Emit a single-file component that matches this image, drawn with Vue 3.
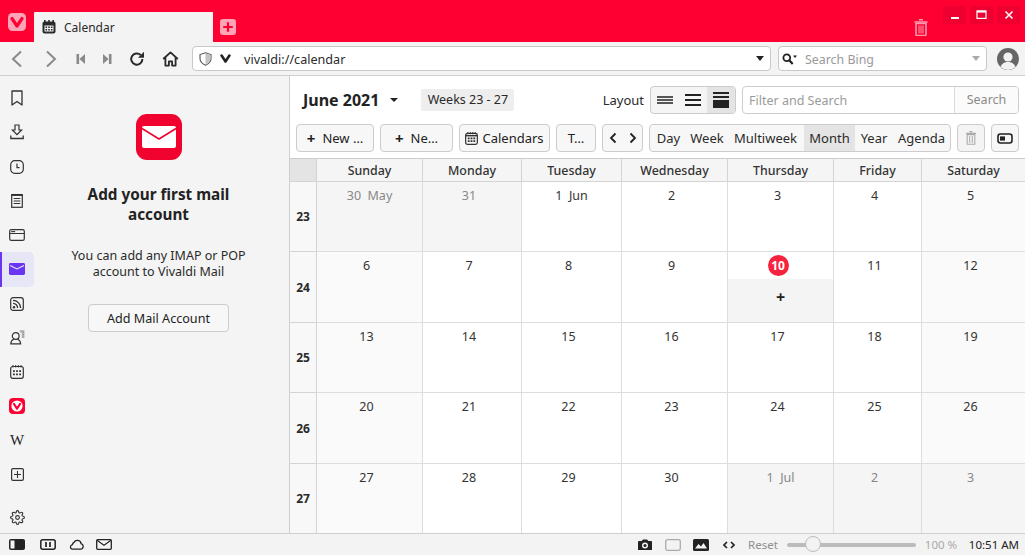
<script setup>
const days = ['Sunday','Monday','Tuesday','Wednesday','Thursday','Friday','Saturday']
const weeks = [
  { n: 23, cells: [['30  May','out m'],['31','out'],['1  Jun','m'],['2',''],['3',''],['4',''],['5','we']] },
  { n: 24, cells: [['6','we'],['7',''],['8',''],['9',''],['10','today'],['11',''],['12','we']] },
  { n: 25, cells: [['13','we'],['14',''],['15',''],['16',''],['17',''],['18',''],['19','we']] },
  { n: 26, cells: [['20','we'],['21',''],['22',''],['23',''],['24',''],['25',''],['26','we']] },
  { n: 27, cells: [['27','we'],['28',''],['29',''],['30',''],['1  Jul','out m'],['2','out'],['3','out']] }
]
</script>

<template>
  <div class="app">
    <header class="titlebar">
      <div class="logo-wrap">
        <svg width="18" height="18" viewBox="0 0 18 18"><rect width="18" height="18" rx="4.5" fill="#ffa3b6"/><path d="M4 5.5 L9 13 L14 5.5" fill="none" stroke="#ff0033" stroke-width="3.2" stroke-linecap="round" stroke-linejoin="round"/></svg>
      </div>
      <div class="tab">
        <svg width="14" height="14" viewBox="0 0 14 14"><rect x="0.5" y="1.5" width="13" height="12" rx="2" fill="#2a2a2a"/><rect x="2" y="0" width="1.6" height="3" fill="#2a2a2a"/><rect x="6.2" y="0" width="1.6" height="3" fill="#2a2a2a"/><rect x="10.4" y="0" width="1.6" height="3" fill="#2a2a2a"/><path d="M2.5 5.5h9v6h-9z" fill="#f3f3f3"/><path d="M3.5 6.5h1.6v1.6H3.5zM6.2 6.5h1.6v1.6H6.2zM8.9 6.5h1.6v1.6H8.9zM3.5 9h1.6v1.6H3.5zM6.2 9h1.6v1.6H6.2zM8.9 9h1.6v1.6H8.9z" fill="#2a2a2a"/></svg>
        <span>Calendar</span>
      </div>
      <div class="newtab">
        <svg width="16" height="16" viewBox="0 0 16 16"><rect width="16" height="16" rx="3" fill="#ffa3b6"/><path d="M8 3.2v9.6M3.2 8h9.6" stroke="#ff0033" stroke-width="2.2"/></svg>
      </div>
      <div class="spacer"></div>
      <svg class="ttrash" width="14" height="17" viewBox="0 0 14 17"><path d="M5 0.8h4M0.5 3h13" stroke="#ff9aae" stroke-width="1.6"/><path d="M2 4.5h10v11a1 1 0 0 1-1 1H3a1 1 0 0 1-1-1z" fill="none" stroke="#ff9aae" stroke-width="1.6"/><path d="M5 6.5v8M7 6.5v8M9 6.5v8" stroke="#ff9aae" stroke-width="1"/></svg>
      <div class="winctl">
        <div class="wbtn"><svg width="10" height="10" viewBox="0 0 10 10"><rect x="1" y="7" width="8" height="2" fill="#fff"/></svg></div>
        <div class="wbtn"><svg width="12" height="10" viewBox="0 0 12 10"><rect x="1" y="1" width="9" height="7.4" fill="none" stroke="#fff" stroke-width="1.2"/><rect x="1" y="0.6" width="9" height="2" fill="#fff"/></svg></div>
        <div class="wbtn"><svg width="10" height="10" viewBox="0 0 10 10"><path d="M1.5 1.5l7 7M8.5 1.5l-7 7" stroke="#fff" stroke-width="1.6"/></svg></div>
      </div>
    </header>

    <nav class="toolbar">
      <svg class="nb first" width="14" height="18" viewBox="0 0 14 18"><path d="M11 1.5L3 9l8 7.5" fill="none" stroke="#8a8a8a" stroke-width="2"/></svg>
      <svg class="nb next" width="14" height="18" viewBox="0 0 14 18"><path d="M3 1.5L11 9l-8 7.5" fill="none" stroke="#8a8a8a" stroke-width="2"/></svg>
      <svg class="nb rw" width="10" height="12" viewBox="0 0 10 12"><path d="M0.5 1h2.6v10H0.5zM9 1v10L3.4 6z" fill="#8a8a8a"/></svg>
      <svg class="nb ff" width="10" height="12" viewBox="0 0 10 12"><path d="M9.5 1H6.9v10h2.6zM1 1v10L6.6 6z" fill="#8a8a8a"/></svg>
      <svg class="nb reload" width="16" height="16" viewBox="0 0 16 16"><path d="M13.4 8a5.6 5.6 0 1 1-1.7-4" fill="none" stroke="#2a2a2a" stroke-width="2"/><path d="M15 0.8v6h-6z" fill="#2a2a2a"/></svg>
      <svg class="nb home" width="17" height="16" viewBox="0 0 17 16"><path d="M1.2 8L8.5 1.4 15.8 8M3.4 6.5V14.6h3.5v-4.2h3.2v4.2h3.5V6.5" fill="none" stroke="#2a2a2a" stroke-width="1.8" stroke-linejoin="round"/></svg>
      <div class="addr">
        <svg width="13" height="14" viewBox="0 0 13 14"><path d="M6.5 0.8L12 2.6v4c0 3.2-2.4 5.3-5.5 6.6C3.4 11.9 1 9.8 1 6.6v-4z" fill="#fff" stroke="#555" stroke-width="1.1"/><path d="M6.5 1.2L11.6 2.9v3.7c0 3-2.2 5-5.1 6.2z" fill="#c4c4c4"/></svg>
        <svg class="v" width="11" height="9" viewBox="0 0 11 9"><path d="M1.6 1.6L5.5 7.4l3.9-5.8" fill="none" stroke="#222" stroke-width="2.6" stroke-linecap="round" stroke-linejoin="round"/></svg>
        <span class="url">vivaldi://calendar</span>
        <span class="spacer"></span>
        <span class="caret"></span>
      </div>
      <div class="search">
        <svg width="16" height="12" viewBox="0 0 16 12"><circle cx="4.8" cy="4.8" r="3.4" fill="none" stroke="#222" stroke-width="1.8"/><path d="M7.3 7.3l3.4 3.6" stroke="#222" stroke-width="2.2"/><path d="M11 2.5h4l-2 2.4z" fill="#222"/></svg>
        <span class="sph">Search Bing</span>
        <span class="spacer"></span>
        <span class="caret grey"></span>
      </div>
      <svg class="avatar" width="22" height="22" viewBox="0 0 22 22"><circle cx="11" cy="11" r="11" fill="#666"/><circle cx="11" cy="9" r="4.6" fill="#f3f3f3"/><path d="M3.5 19c1.5-4 4.5-5 7.5-5s6 1 7.5 5a11 11 0 0 1-15 0z" fill="#f3f3f3"/></svg>
    </nav>

    <div class="main">
      <aside class="iconbar">
        <div class="ib"><svg width="14" height="16" viewBox="0 0 14 16"><path d="M2 1h10v14L7 11.5 2 15z" fill="none" stroke="#333" stroke-width="1.3" stroke-linejoin="round"/></svg></div>
        <div class="ib"><svg width="14" height="16" viewBox="0 0 14 16"><path d="M5 1h4v5h2.6L7 10.6 2.4 6H5z" fill="none" stroke="#333" stroke-width="1.2"/><path d="M0.8 11.5v3h12.4v-3" fill="none" stroke="#333" stroke-width="1.3"/></svg></div>
        <div class="ib"><svg width="14" height="14" viewBox="0 0 14 14"><rect x="0.7" y="0.7" width="12.6" height="12.6" rx="4" fill="none" stroke="#333" stroke-width="1.2"/><path d="M7 3.5V7.6h2.6" fill="none" stroke="#333" stroke-width="1.2"/></svg></div>
        <div class="ib"><svg width="12" height="14" viewBox="0 0 12 14"><rect x="0.7" y="0.7" width="10.6" height="12.6" fill="none" stroke="#333" stroke-width="1.2"/><path d="M0.7 1h10.6" stroke="#222" stroke-width="1.6"/><path d="M2.7 4.5h6.6M2.7 7h6.6M2.7 9.5h6.6" stroke="#333"/></svg></div>
        <div class="ib"><svg width="16" height="12" viewBox="0 0 16 12"><rect x="0.7" y="0.7" width="14.6" height="10.6" rx="1.6" fill="none" stroke="#333" stroke-width="1.2"/><path d="M0.7 4.5h14.6" stroke="#333"/><path d="M2.2 2.6h4" stroke="#333" stroke-width="1.1"/></svg></div>
        <div class="ib active"><svg width="16" height="12" viewBox="0 0 16 12"><rect width="16" height="12" rx="1.4" fill="#6a35f0"/><path d="M1 2.4L8 6l7-3.6" fill="none" stroke="#e6e6f6" stroke-width="1.1"/></svg></div>
        <div class="ib"><svg width="14" height="14" viewBox="0 0 14 14"><rect x="0.7" y="0.7" width="12.6" height="12.6" rx="2.4" fill="none" stroke="#333" stroke-width="1.2"/><circle cx="4" cy="10.2" r="1.2" fill="#333"/><path d="M3 6.4a4.5 4.5 0 0 1 4.6 4.6M3 3.4A7.6 7.6 0 0 1 10.6 11" fill="none" stroke="#333" stroke-width="1.3"/></svg></div>
        <div class="ib"><svg width="15" height="15" viewBox="0 0 15 15"><circle cx="5.7" cy="6" r="3.4" fill="none" stroke="#333" stroke-width="1.2"/><path d="M3.8 9.2c-1.4.6-3 1.6-3 4.6h9.8c0-3-1.6-4-3-4.6" fill="none" stroke="#333" stroke-width="1.2"/><path d="M9.8 0.2h4.6v7.8h-2.6V2.6H9.8z" fill="#aaa"/></svg></div>
        <div class="ib"><svg width="14" height="14" viewBox="0 0 14 14"><rect x="0.7" y="1.5" width="12.6" height="11.8" rx="2" fill="none" stroke="#333" stroke-width="1.2"/><path d="M3 0v2.5M5.7 0v2.5M8.3 0v2.5M11 0v2.5" stroke="#333"/><path d="M3 5.2h1.8V7H3zM6.1 5.2h1.8V7H6.1zM9.2 5.2H11V7H9.2zM3 8.4h1.8v1.8H3zM6.1 8.4h1.8v1.8H6.1zM9.2 8.4H11v1.8H9.2z" fill="#333"/></svg></div>
        <div class="ib"><svg width="16" height="16" viewBox="0 0 16 16"><rect width="16" height="16" rx="4" fill="#f03"/><circle cx="8" cy="8" r="5.6" fill="#fff"/><path d="M5 6l3 4.6L11 6" fill="none" stroke="#f03" stroke-width="2.2" stroke-linecap="round" stroke-linejoin="round"/></svg></div>
        <div class="ib wiki">W</div>
        <div class="ib"><svg width="13" height="13" viewBox="0 0 13 13"><rect x="0.6" y="0.6" width="11.8" height="11.8" rx="1.4" fill="none" stroke="#333" stroke-width="1.2"/><path d="M6.5 3v7M3 6.5h7" stroke="#333" stroke-width="1.1"/></svg></div>
        <div class="spacer"></div>
        <div class="ib gear"><svg width="15" height="15" viewBox="0 0 24 24"><circle cx="12" cy="12" r="3" fill="none" stroke="#333" stroke-width="1.8"/><path fill="none" stroke="#333" stroke-width="1.8" d="M19.4 15a1.65 1.65 0 0 0 .33 1.82l.06.06a2 2 0 0 1 0 2.83 2 2 0 0 1-2.83 0l-.06-.06a1.65 1.65 0 0 0-1.82-.33 1.65 1.65 0 0 0-1 1.51V21a2 2 0 0 1-2 2 2 2 0 0 1-2-2v-.09A1.65 1.65 0 0 0 9 19.4a1.65 1.65 0 0 0-1.82.33l-.06.06a2 2 0 0 1-2.83 0 2 2 0 0 1 0-2.83l.06-.06a1.65 1.65 0 0 0 .33-1.82 1.65 1.65 0 0 0-1.51-1H3a2 2 0 0 1-2-2 2 2 0 0 1 2-2h.09A1.65 1.65 0 0 0 4.6 9a1.65 1.65 0 0 0-.33-1.82l-.06-.06a2 2 0 0 1 0-2.83 2 2 0 0 1 2.83 0l.06.06a1.65 1.65 0 0 0 1.82.33H9a1.65 1.65 0 0 0 1-1.51V3a2 2 0 0 1 2-2 2 2 0 0 1 2 2v.09a1.65 1.65 0 0 0 1 1.51 1.65 1.65 0 0 0 1.82-.33l.06-.06a2 2 0 0 1 2.83 0 2 2 0 0 1 0 2.83l-.06.06a1.65 1.65 0 0 0-.33 1.82V9a1.65 1.65 0 0 0 1.51 1H21a2 2 0 0 1 2 2 2 2 0 0 1-2 2h-.09a1.65 1.65 0 0 0-1.51 1z"/></svg></div>
      </aside>

      <section class="panel">
        <svg class="mailicon" width="46" height="46" viewBox="0 0 46 46"><rect width="46" height="46" rx="11" fill="#f0032f"/><rect x="6" y="12" width="34" height="22" rx="2" fill="#fff"/><path d="M6 14.5L23 25l17-10.5" fill="none" stroke="#f0032f" stroke-width="1.6"/></svg>
        <h2>Add your first mail account</h2>
        <p>You can add any IMAP or POP account to Vivaldi Mail</p>
        <button class="addbtn">Add Mail Account</button>
      </section>

      <section class="cal">
        <div class="row1">
          <strong class="month">June 2021</strong>
          <span class="caret mcaret"></span>
          <span class="badge">Weeks 23 - 27</span>
          <span class="spacer"></span>
          <span class="lay">Layout</span>
          <div class="layseg">
            <div class="ls"><svg width="16" height="8" viewBox="0 0 16 8"><path d="M0 1h16M0 4h16M0 7h16" stroke="#222" stroke-width="1.4"/></svg></div>
            <div class="ls"><svg width="16" height="12" viewBox="0 0 16 12"><path d="M0 1h16M0 6h16M0 11h16" stroke="#222" stroke-width="2"/></svg></div>
            <div class="ls on"><svg width="16" height="16" viewBox="0 0 16 16"><path d="M0 0h16v2H0zM0 4h16v2H0zM0 8h16v8H0z" fill="#222"/></svg></div>
          </div>
          <div class="filter"><span class="fph">Filter and Search</span><span class="fbtn">Search</span></div>
        </div>
        <div class="row2">
          <button class="b w78"><b>+</b> New …</button>
          <button class="b w73"><b>+</b> Ne…</button>
          <button class="b w91"><svg width="13" height="13" viewBox="0 0 14 14"><rect x="0.7" y="1.5" width="12.6" height="11.8" rx="2" fill="none" stroke="#333" stroke-width="1.3"/><path d="M3 0v2.5M5.7 0v2.5M8.3 0v2.5M11 0v2.5" stroke="#333"/><path d="M1 4h12" stroke="#333" stroke-width="1.5"/><path d="M3 6h2v1.8H3zM6 6h2v1.8H6zM9 6h2v1.8H9zM3 9h2v1.8H3zM6 9h2v1.8H6zM9 9h2v1.8H9z" fill="#333"/></svg>Calendars</button>
          <button class="b w40">T…</button>
          <button class="b w41"><svg width="28" height="12" viewBox="0 0 28 12"><path d="M6.5 1.5L2 6l4.5 4.5M21.5 1.5L26 6l-4.5 4.5" fill="none" stroke="#222" stroke-width="1.8"/></svg></button>
          <div class="views">
            <span class="v-day">Day</span><span class="v-week">Week</span><span class="v-multi">Multiweek</span><span class="v-month on">Month</span><span class="v-year">Year</span><span class="last">Agenda</span>
          </div>
          <button class="b sq dis"><svg width="10" height="14" viewBox="0 0 10 14"><path d="M3.5 .7h3M0 2.3h10" stroke="#aaa" stroke-width="1.3"/><path d="M1.2 3.6h7.6v9.7H1.2z" fill="none" stroke="#aaa" stroke-width="1.1"/><path d="M3.7 5v7M6.3 5v7" stroke="#aaa"/></svg></button>
          <button class="b sq"><svg width="16" height="11" viewBox="0 0 16 11"><rect x="1" y="1" width="14" height="9" rx="2.4" fill="none" stroke="#222" stroke-width="1.6"/><rect x="3" y="3.4" width="5" height="4.2" fill="#222"/></svg></button>
        </div>
        <div class="grid">
          <div class="head corner"></div>
          <div class="head" v-for="d in days" :key="d">{{ d }}</div>
          <template v-for="w in weeks" :key="w.n">
            <div class="wk">{{ w.n }}</div>
            <div v-for="c in w.cells" :key="c[0]" class="cell" :class="c[1]">
              <template v-if="c[1] === 'today'">
                <span class="todaynum">{{ c[0] }}</span>
                <div class="plus">+</div>
              </template>
              <span v-else class="num">{{ c[0] }}</span>
            </div>
          </template>
        </div>
      </section>
    </div>

    <footer class="status">
      <div class="sl">
        <svg width="16" height="11" viewBox="0 0 16 11"><rect width="16" height="11" rx="2" fill="#222"/><rect x="1.5" y="1.5" width="4" height="8" fill="#f3f3f3"/></svg>
        <svg class="s2" width="16" height="11" viewBox="0 0 16 11"><rect x="0.8" y="0.8" width="14.4" height="9.4" rx="2" fill="none" stroke="#222" stroke-width="1.5"/><path d="M6 3v5M10 3v5" stroke="#222" stroke-width="1.7"/></svg>
        <svg width="16" height="11" viewBox="0 0 16 11"><path d="M4 10.2h8.5a2.8 2.8 0 0 0 .6-5.5A3.8 3.8 0 0 0 6 3.4a3.4 3.4 0 0 0-1.6 2.2A2.4 2.4 0 0 0 4 10.2z" fill="none" stroke="#222" stroke-width="1.3"/></svg>
        <svg width="16" height="11" viewBox="0 0 16 11"><rect x="0.7" y="0.7" width="14.6" height="9.6" rx="1" fill="none" stroke="#222" stroke-width="1.3"/><path d="M1 1.2l7 5 7-5" fill="none" stroke="#222" stroke-width="1.1"/></svg>
      </div>
      <span class="spacer"></span>
      <svg class="r1" width="16" height="12" viewBox="0 0 16 12"><path d="M1 3a1 1 0 0 1 1-1h2.6L6 0.6h4L11.4 2H14a1 1 0 0 1 1 1v8H1z" fill="#222"/><circle cx="8" cy="6.5" r="3" fill="#f3f3f3"/><circle cx="8" cy="6.5" r="1.5" fill="#222"/></svg>
      <svg class="r2" width="16" height="12" viewBox="0 0 16 12"><rect x="0.7" y="0.7" width="14.6" height="10.6" rx="1.8" fill="none" stroke="#aaa" stroke-width="1.3"/></svg>
      <svg class="r3" width="16" height="12" viewBox="0 0 16 12"><rect width="16" height="12" rx="1.5" fill="#222"/><path d="M2 9.5L5.5 5 8 7.5 10.5 4 14 9.5z" fill="#f3f3f3"/></svg>
      <svg class="r4" width="12" height="8" viewBox="0 0 12 8"><path d="M4 1L1 4l3 3M8 1l3 3-3 3" fill="none" stroke="#222" stroke-width="1.6"/></svg>
      <span class="reset">Reset</span>
      <div class="slider"><span class="thumb"></span></div>
      <span class="pct">100 %</span>
      <span class="time">10:51 AM</span>
    </footer>
  </div>
</template>

<style>
html, body { margin: 0; padding: 0; overflow: hidden; background: #f3f3f3; }
</style>

<style scoped>
.app { width: 1025px; height: 555px; display: flex; flex-direction: column; overflow: hidden; background: #f4f4f4; font-family: "Noto Sans", sans-serif; font-size: 13px; color: #2a2a2a; }
.spacer { flex: 1; }
svg { display: block; flex: none; }

.titlebar { height: 42px; flex: none; background: #ff0033; display: flex; align-items: flex-start; position: relative; }
.logo-wrap { margin: 13px 0 0 8px; }
.tab { width: 179px; height: 30px; margin: 12px 0 0 8px; background: #f3f3f3; display: flex; align-items: center; padding-left: 8px; box-sizing: border-box; gap: 8px; border-radius: 1px 1px 0 0; font-size: 12px; }
.newtab { margin: 19px 0 0 7px; }
.ttrash { margin: 19px 15px 0 0; }
.winctl { display: flex; gap: 4px; margin: 6px 5px 0 0; }
.wbtn { width: 23px; height: 18px; background: #ee0030; display: flex; align-items: center; justify-content: center; }

.toolbar { height: 34px; flex: none; background: #f3f3f3; border-bottom: 1px solid #cfcfcf; box-sizing: border-box; display: flex; align-items: center; }
.nb.first { margin-left: 10px; }
.nb.next { margin-left: 20px; }
.nb.rw { margin-left: 18px; }
.nb.ff { margin-left: 16px; }
.nb.reload { margin-left: 17px; }
.nb.home { margin-left: 17px; }
.addr { margin-left: 13px; width: 579px; height: 25px; box-sizing: border-box; background: #fff; border: 1px solid #c9c9c9; border-radius: 4px; display: flex; align-items: center; padding: 0 6px 0 6px; }
.v { margin-left: 8px; }
.url { margin-left: 13px; font-size: 12.6px; padding-top: 1px; }
.caret { width: 0; height: 0; border-left: 4px solid transparent; border-right: 4px solid transparent; border-top: 5px solid #222; }
.caret.grey { border-top-color: #aaa; }
.search { margin-left: 7px; width: 209px; height: 25px; box-sizing: border-box; background: #fff; border: 1px solid #c9c9c9; border-radius: 4px; display: flex; align-items: center; padding: 0 6px 0 3px; }
.sph { margin-left: 7px; color: #9a9a9a; font-size: 12.4px; padding-top: 1px; }
.avatar { margin-left: 10px; }

.main { flex: 1; display: flex; min-height: 0; }
.iconbar { width: 34px; flex: none; display: flex; flex-direction: column; padding: 5px 0 0; box-sizing: border-box; }
.ib { height: 34.25px; flex: none; display: flex; align-items: center; justify-content: center; box-sizing: border-box; }
.ib.active { background: #e6e6f6; border-left: 2px solid #6a35f0; border-radius: 0 5px 5px 0; padding-right: 2px; }
.ib.gear { height: 26px; margin-bottom: 3px; }
.wiki { font-family: "Liberation Serif", serif; font-size: 15px; color: #222; }

.panel { width: 256px; flex: none; box-sizing: border-box; padding: 38px 6px 0 0; display: flex; flex-direction: column; align-items: center; text-align: center; border-right: 1px solid #cfcfcf; }
.mailicon { margin-left: 1px; }
.panel h2 { margin: 24px 0 0; width: 190px; font-size: 15.3px; line-height: 20px; font-weight: 700; color: #222; }
.panel p { margin: 24px 0 0; width: 190px; font-size: 12.5px; line-height: 16px; }
.addbtn { margin-top: 24px; width: 141px; height: 28px; border: 1px solid #ccc; border-radius: 4px; background: #f7f7f7; font: inherit; font-size: 12.6px; color: #222; padding: 0; }

.cal { flex: 1; min-width: 0; background: #fff; display: flex; flex-direction: column; }
.row1 { height: 48px; flex: none; display: flex; align-items: center; padding: 0 6px 0 13px; box-sizing: border-box; }
.month { font-size: 16px; font-weight: 700; color: #222; }
.mcaret { margin-left: 11px; border-left-width: 4.5px; border-right-width: 4.5px; border-top-width: 4.5px; }
.badge { margin-left: 23px; width: 93px; height: 22px; line-height: 22px; text-align: center; background: #eee; border-radius: 2px; font-size: 12.5px; }
.lay { margin-right: 6px; }
.layseg { display: flex; width: 86px; height: 28px; box-sizing: border-box; border: 1px solid #ccc; border-radius: 4px; background: #f5f5f5; overflow: hidden; }
.ls { flex: 1; display: flex; align-items: center; justify-content: center; }
.ls.on { background: #e4e4e4; }
.filter { margin-left: 6px; width: 277px; height: 28px; box-sizing: border-box; border: 1px solid #ccc; border-radius: 4px; display: flex; align-items: center; overflow: hidden; }
.fph { flex: 1; padding-left: 6px; color: #9a9a9a; font-size: 12.5px; }
.fbtn { width: 64px; height: 100%; line-height: 26px; text-align: center; color: #8a8a8a; border-left: 1px solid #ddd; box-sizing: border-box; background: #fbfbfb; font-size: 12.5px; }
.row2 { height: 34px; flex: none; display: flex; gap: 6px; padding: 0 0 0 6px; box-sizing: border-box; }
.b { height: 28px; box-sizing: border-box; border: 1px solid #ccc; border-radius: 4px; background: #f7f7f7; font: inherit; color: #222; padding: 0; display: flex; align-items: center; justify-content: center; gap: 4px; white-space: nowrap; }
.w78 { width: 78px; } .w73 { width: 73px; } .w91 { width: 91px; } .w40 { width: 40px; } .w41 { width: 41px; }
.b b { font-size: 15px; margin-right: 3px; line-height: 1; }
.views { width: 302px; height: 28px; box-sizing: border-box; border: 1px solid #ccc; border-radius: 4px; background: #f7f7f7; display: flex; overflow: hidden; }
.views span { display: block; line-height: 26px; text-align: center; flex: none; }
.v-day { width: 37px; } .v-week { width: 40px; } .v-multi { width: 77px; } .v-month { width: 51px; } .v-year { width: 38px; }
.views .last { flex: 1; }
.views .on { background: #e4e4e4; }
.sq { width: 28px; }
.dis { background: #f4f4f4; }

.grid { flex: 1; display: grid; grid-template-columns: 27px 106px 99px 100px 106px 106px 88px 103px; grid-template-rows: 23px 70px 71px 70px 71px 70px; border-top: 1px solid #ccc; }
.head { background: #f5f5f5; border-right: 1px solid #d4d4d4; border-bottom: 1px solid #d4d4d4; text-align: center; line-height: 24px; font-weight: 500; color: #333; box-sizing: border-box; font-size: 12.4px; }
.head.corner { background: #e4e4e4; }
.head:nth-child(8) { border-right: 0; }
.wk { display: flex; align-items: center; justify-content: center; font-weight: 700; font-size: 12px; background: #f8f8f8; border-right: 1px solid #d4d4d4; border-bottom: 1px solid #d4d4d4; box-sizing: border-box; }
.cell { border-right: 1px solid #ddd; border-bottom: 1px solid #ddd; box-sizing: border-box; text-align: center; padding-top: 5px; font-size: 12.5px; line-height: 17px; background: #fff; color: #333; white-space: pre; display: flex; flex-direction: column; align-items: center; }
.cell:nth-child(8n) { border-right: 0; }
.num { padding-right: 6px; }
.cell.m .num { padding-right: 0; }
.cell.we { background: #fafafa; }
.cell.out { background: #f5f5f5; color: #888; }
.cell.today { padding-top: 3px; }
.todaynum { width: 21px; height: 21px; border-radius: 50%; background: #f6223e; color: #fff; font-weight: 700; font-size: 12px; line-height: 21px; flex: none; margin-right: 5px; }
.plus { align-self: stretch; flex: 1; margin-top: 3px; padding-bottom: 6px; background: #f4f4f4; font-weight: 700; font-size: 16px; display: flex; align-items: center; justify-content: center; color: #222; }

.status { height: 22px; flex: none; box-sizing: border-box; border-top: 1px solid #cfcfcf; background: #f3f3f3; display: flex; align-items: center; font-size: 11.5px; }
.sl { display: flex; margin-left: 9px; gap: 12px; }
.s2 { margin-left: 3px; }
.r2, .r3 { margin-left: 12px; }
.r4 { margin-left: 14px; }
.reset { margin-left: 13px; color: #8f8f8f; }
.slider { margin-left: 9px; width: 129px; height: 4px; background: #bbb; border-radius: 2px; position: relative; flex: none; }
.thumb { position: absolute; left: 18px; top: -7px; width: 16px; height: 16px; box-sizing: border-box; border-radius: 50%; background: #f3f3f3; border: 1px solid #bbb; }
.pct { margin-left: 9px; color: #aaa; width: 32px; white-space: nowrap; }
.time { margin-left: 12px; margin-right: 6px; font-size: 11.5px; color: #222; white-space: nowrap; }
</style>
